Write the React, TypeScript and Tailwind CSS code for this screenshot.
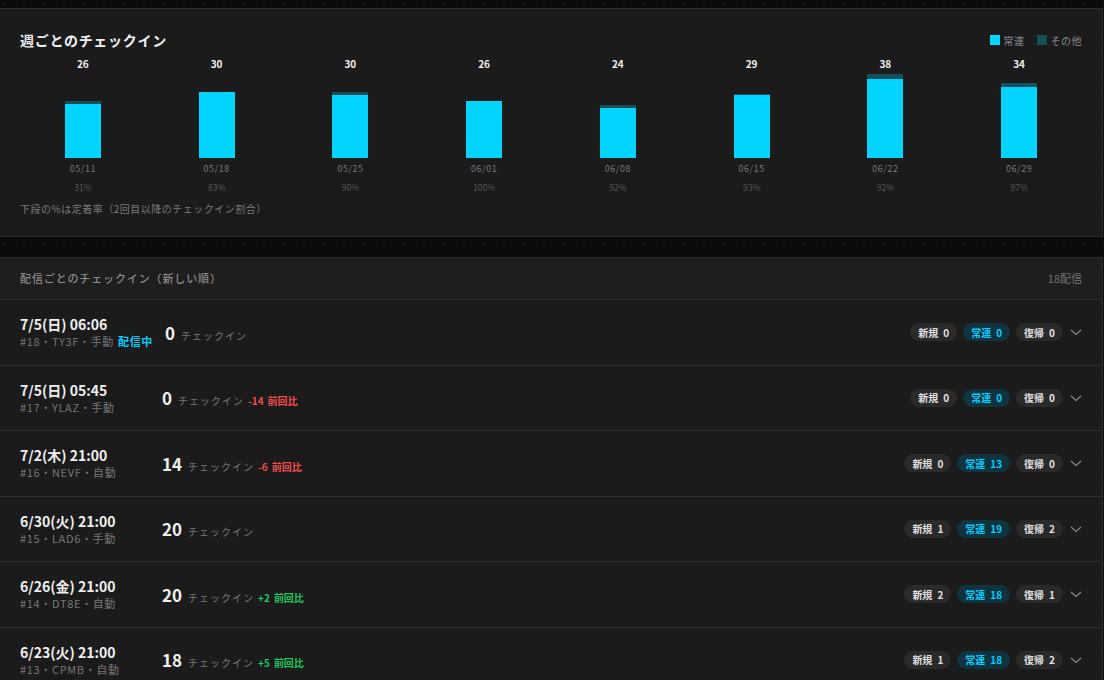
import React from "react";

const weeks = [
  { v: 26, other: 3, d: "05/11", p: "31%" },
  { v: 30, other: 0, d: "05/18", p: "83%" },
  { v: 30, other: 3, d: "05/25", p: "90%" },
  { v: 26, other: 0, d: "06/01", p: "100%" },
  { v: 24, other: 3, d: "06/08", p: "92%" },
  { v: 29, other: 1, d: "06/15", p: "93%" },
  { v: 38, other: 5, d: "06/22", p: "92%" },
  { v: 34, other: 4, d: "06/29", p: "97%" },
];

type Row = {
  date: string;
  sub: string;
  live?: boolean;
  n: number;
  delta?: number;
  a: number;
  b: number;
  c: number;
};

const rows: Row[] = [
  { date: "7/5(日) 06:06", sub: "#18・TY3F・手動", live: true, n: 0, a: 0, b: 0, c: 0 },
  { date: "7/5(日) 05:45", sub: "#17・YLAZ・手動", n: 0, delta: -14, a: 0, b: 0, c: 0 },
  { date: "7/2(木) 21:00", sub: "#16・NEVF・自動", n: 14, delta: -6, a: 0, b: 13, c: 0 },
  { date: "6/30(火) 21:00", sub: "#15・LAD6・手動", n: 20, a: 1, b: 19, c: 2 },
  { date: "6/26(金) 21:00", sub: "#14・DT8E・自動", n: 20, delta: 2, a: 2, b: 18, c: 1 },
  { date: "6/23(火) 21:00", sub: "#13・CPMB・自動", n: 18, delta: 5, a: 1, b: 18, c: 2 },
];

const font = { fontFamily: '"Noto Sans CJK JP", "Noto Sans", sans-serif' };

function Chevron() {
  return (
    <svg width="12" height="12" viewBox="0 0 12 12" className="ml-[1px] shrink-0">
      <path d="M1 4 L6 8.5 L11 4" fill="none" stroke="#8a8a8a" strokeWidth="1.1" />
    </svg>
  );
}

export default function App() {
  const scale = 84 / 38;
  return (
    <div
      className="h-[680px] overflow-hidden bg-[#0b0b0b] bg-[radial-gradient(circle,#1e1e1e_0.8px,transparent_1px)] bg-size-[20px_20px] bg-position-[-6px_-6px] pt-2 text-[#e8e8e8]"
      style={font}
    >
      {/* Weekly chart panel */}
      <div className="ml-[-1px] w-[1104px] border border-[#2c2c2c] bg-[#1b1b1b] px-5 pb-5 pt-[21px]">
        <div className="flex h-5 items-center justify-between">
          <div className="text-[14px] font-bold tracking-[0.05em] text-[#f0f0f0]">週ごとのチェックイン</div>
          <div className="flex items-center gap-3 text-[10px] tracking-[0.05em] text-[#8a8a8a]">
            <div className="flex items-center gap-1">
              <span className="h-2.5 w-2.5 bg-[#00d4ff]" />
              <span>常連</span>
            </div>
            <div className="flex items-center gap-1">
              <span className="h-2.5 w-2.5 bg-[#15505a]" />
              <span>その他</span>
            </div>
          </div>
        </div>
        <div className="-mx-1 mt-[7px] grid grid-cols-8">
          {weeks.map((w) => {
            const h = Math.round(w.v * scale);
            const o = w.other;
            return (
              <div key={w.d} className="flex flex-col items-center">
                <div className="text-[10px] font-bold leading-[14px] text-[#f0f0f0]">{w.v}</div>
                <div className="flex h-[87px] items-end">
                  <div className="flex w-9 flex-col" style={{ height: h }}>
                    <div className="bg-[#15505a]" style={{ height: o }} />
                    <div className="flex-1 bg-[#00d4ff]" />
                  </div>
                </div>
                <div className="mt-1 text-[9px] leading-[14px] tracking-[0.06em] text-[#777]">{w.d}</div>
                <div className="mt-1 text-[8.5px] leading-[14px] text-[#555]">{w.p}</div>
              </div>
            );
          })}
        </div>
        <div className="mt-2 text-[10px] leading-[14px] tracking-[0.05em] text-[#7a7a7a]">
          下段の%は定着率（2回目以降のチェックイン割合）
        </div>
      </div>

      {/* Per-stream panel */}
      <div className="ml-[-1px] mt-5 w-[1104px] border border-[#2c2c2c] bg-[#1b1b1b]">
        <div className="flex h-[42px] items-center justify-between border-b border-[#2c2c2c] bg-[#1e1e1e] pl-5 pr-5">
          <div className="text-[11px] font-medium tracking-[0.08em] text-[#8a8a8a]">配信ごとのチェックイン（新しい順）</div>
          <div className="text-[11px] text-[#777]">18配信</div>
        </div>
        {rows.map((r) => (
          <div
            key={r.sub}
            className="flex h-[65.5px] items-center border-b border-[#2c2c2c] pl-5 pr-5"
          >
            <div className="flex min-w-[130px] flex-col">
              <div className="text-[14px] font-bold leading-[18px] text-[#f0f0f0]">{r.date}</div>
              <div className="flex items-center text-[11px] leading-[16px] tracking-[0.06em] text-[#777]">
                <span>{r.sub}</span>
                {r.live && <span className="ml-1 font-bold text-[#00cfff]">配信中</span>}
              </div>
            </div>
            <div className="ml-3 flex items-baseline">
              <span className="text-[17px] font-bold text-[#f0f0f0]">{r.n}</span>
              <span className="ml-1.5 text-[10px] tracking-[0.1em] text-[#777]">チェックイン</span>
              {r.delta !== undefined && (
                <span
                  className={
                    r.delta < 0
                      ? "ml-1 flex gap-1 text-[10px] font-bold text-[#ef4d4d]"
                      : "ml-1 flex gap-1 text-[10px] font-bold text-[#22c55e]"
                  }
                >
                  <span>{r.delta > 0 ? `+${r.delta}` : `${r.delta}`}</span>
                  <span>前回比</span>
                </span>
              )}
            </div>
            <div className="ml-auto flex items-center gap-1.5">
              <span className="flex h-[18px] items-center gap-[5px] rounded-full bg-[#2a2a2a] px-2 text-[10px] font-bold text-[#e0e0e0]">
                <span>新規</span>
                <span>{r.a}</span>
              </span>
              <span className="flex h-[18px] items-center gap-[5px] rounded-full bg-[#0f3440] px-2 text-[10px] font-bold text-[#00cfff]">
                <span>常連</span>
                <span>{r.b}</span>
              </span>
              <span className="flex h-[18px] items-center gap-[5px] rounded-full bg-[#2a2a2a] px-2 text-[10px] font-bold text-[#e0e0e0]">
                <span>復帰</span>
                <span>{r.c}</span>
              </span>
              <Chevron />
            </div>
          </div>
        ))}
      </div>
    </div>
  );
}
